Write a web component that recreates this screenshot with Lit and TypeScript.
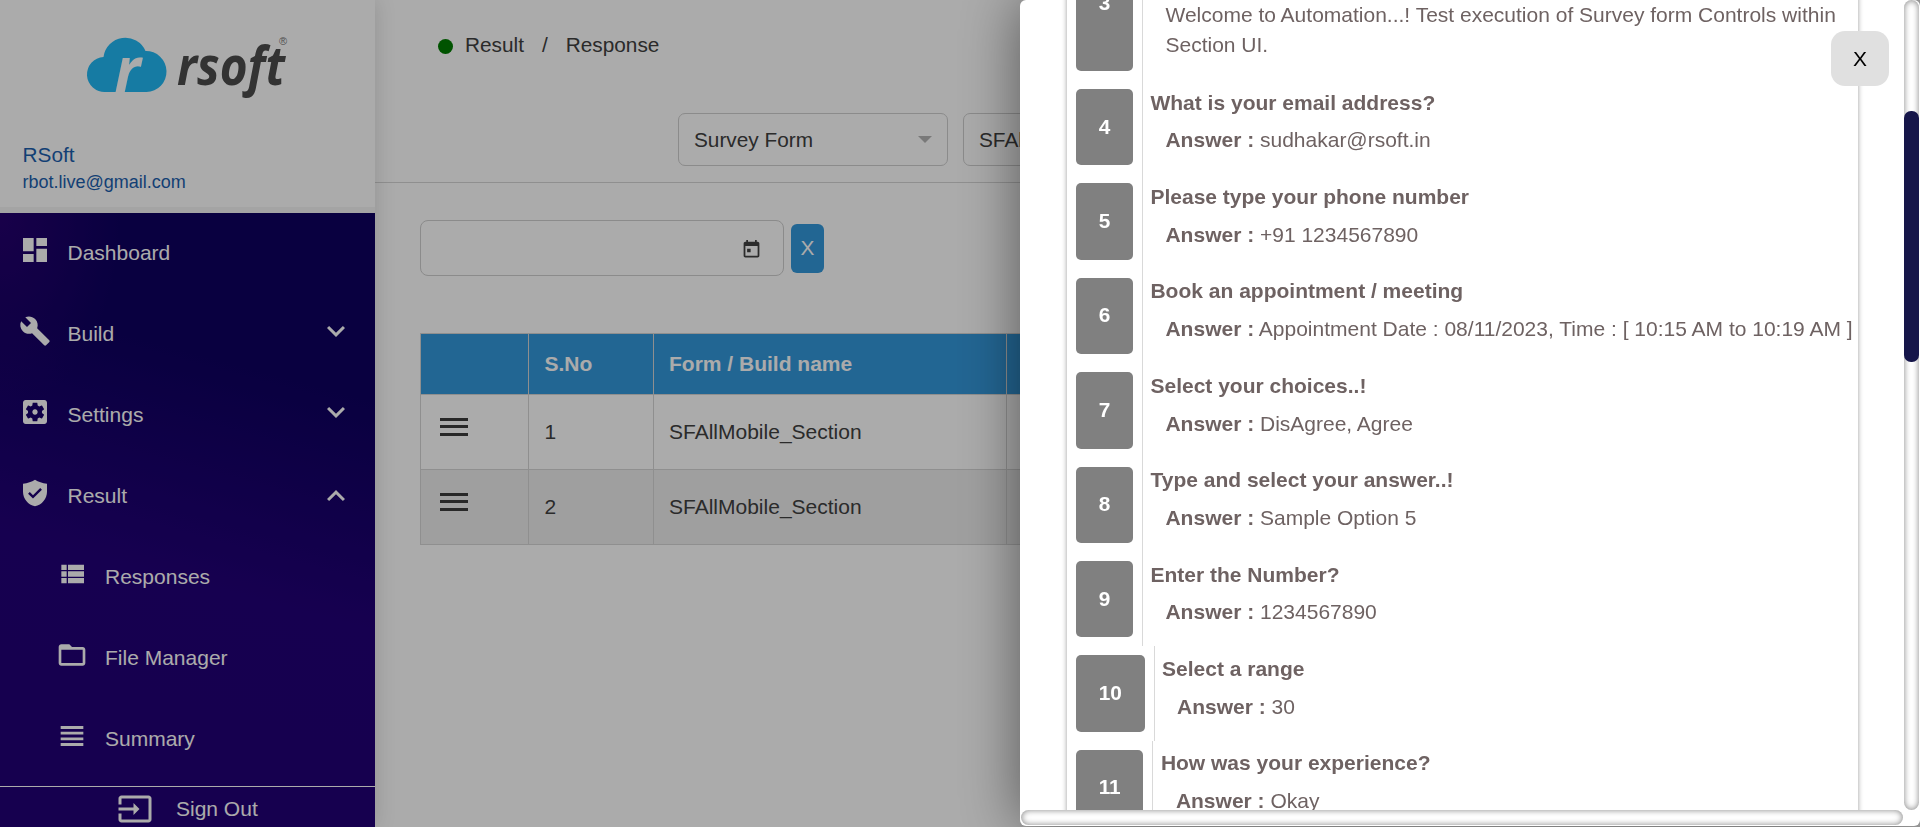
import { LitElement, css, html, svg } from 'lit';
import { customElement } from 'lit/decorators.js';

// material icon paths, 24x24 box
const ICONS: Record<string, string> = {
  dashboard: 'M3 13h8V3H3v10zm0 8h8v-6H3v6zm10 0h8V11h-8v10zm0-18v6h8V3h-8z',
  build:
    'M22.7 19l-9.1-9.1c.9-2.3.4-5-1.5-6.9-2-2-5-2.4-7.4-1.3L9 6 6 9 1.6 4.7C.4 7.1.9 10.1 2.9 12.1c1.9 1.9 4.6 2.4 6.9 1.5l9.1 9.1c.4.4 1 .4 1.4 0l2.3-2.3c.5-.4.5-1.1.1-1.4z',
  settings:
    'M12 10c-1.1 0-2 .9-2 2s.9 2 2 2 2-.9 2-2-.9-2-2-2zm7-7H5c-1.11 0-2 .9-2 2v14c0 1.1.89 2 2 2h14c1.11 0 2-.9 2-2V5c0-1.1-.89-2-2-2zm-1.75 9c0 .23-.02.46-.05.68l1.48 1.16c.13.11.17.3.08.45l-1.4 2.42c-.09.15-.27.21-.43.15l-1.74-.7c-.36.28-.76.51-1.18.69l-.26 1.85c-.03.17-.18.3-.35.3h-2.8c-.17 0-.32-.13-.35-.29l-.26-1.85c-.43-.18-.82-.41-1.18-.69l-1.74.7c-.16.06-.34 0-.43-.15l-1.4-2.42c-.09-.15-.05-.34.08-.45l1.48-1.16c-.03-.23-.05-.46-.05-.69 0-.23.02-.46.05-.68l-1.48-1.16c-.13-.11-.17-.3-.08-.45l1.4-2.42c.09-.15.27-.21.43-.15l1.74.7c.36-.28.76-.51 1.18-.69l.26-1.85c.03-.17.18-.3.35-.3h2.8c.17 0 .32.13.35.29l.26 1.85c.43.18.82.41 1.18.69l1.74-.7c.16-.06.34 0 .43.15l1.4 2.42c.09.15.05.34-.08.45l-1.48 1.16c.03.23.05.46.05.69z',
  shield:
    'M12 2C9.5 3.6 6.5 4.6 3 5v6c0 5.2 3.8 9.8 9 11 5.2-1.2 9-5.8 9-11V5c-3.5-.4-6.5-1.4-9-3zm-1.5 14.2l-3.7-3.7 1.3-1.3 2.4 2.4 5.4-5.4 1.3 1.3-6.7 6.7z',
  list: 'M4 14h4v-4H4v4zm0 5h4v-4H4v4zM4 9h4V5H4v4zm5 5h12v-4H9v4zm0 5h12v-4H9v4zM9 5v4h12V5H9z',
  folder:
    'M20 6h-8l-2-2H4c-1.1 0-1.99.9-1.99 2L2 18c0 1.1.9 2 2 2h16c1.1 0 2-.9 2-2V8c0-1.1-.9-2-2-2zm0 12H4V8h16v10z',
  headline: 'M4 15h16v-2H4v2zm0 4h16v-2H4v2zm0-8h16V9H4v2zm0-6v2h16V5H4z',
  down: 'M16.59 8.59L12 13.17 7.41 8.59 6 10l6 6 6-6z',
  up: 'M12 8l-6 6 1.41 1.41L12 10.83l4.59 4.58L18 14z',
  input:
    'M21 3.01H3c-1.1 0-2 .9-2 2V9h2V4.99h18v14.03H3V15H1v4.01c0 1.1.9 1.98 2 1.98h18c1.1 0 2-.88 2-1.98v-14c0-1.11-.9-2-2-2zM11 16l4-4-4-4v3H1v2h10v3z',
  event:
    'M11 11H7v4h4zM16 1v2H8V1H6v2H5c-1.11 0-1.99.9-1.99 2L3 19c0 1.1.89 2 2 2h14c1.1 0 2-.9 2-2V5c0-1.1-.9-2-2-2h-1V1h-2zm3 18H5V8h14v11z',
};

const icon = (name: string, cls = '') =>
  html`<svg class="icon ${cls}" viewBox="0 0 24 24" fill="currentColor"><path d=${ICONS[name]}></path></svg>`;

const logo = svg`
  <g transform="translate(2.5 0)">
    <path fill="#21b8f3" d="M103 92a17.5 17.5 0 0 1-2-35 22 22 0 0 1 42-6 20.5 20.5 0 0 1 1 41z"></path>
    <text x="112" y="92" class="logo-r">r</text>
  </g>
  <text x="177" y="85" class="logo-word" textLength="108" lengthAdjust="spacingAndGlyphs">rsoft</text>
  <text x="279" y="45" class="logo-reg">®</text>
`;

const NAV = [
  { label: 'Dashboard', icon: 'dashboard' },
  { label: 'Build', icon: 'build', chevron: 'down' },
  { label: 'Settings', icon: 'settings', chevron: 'down' },
  { label: 'Result', icon: 'shield', chevron: 'up' },
  { label: 'Responses', icon: 'list', sub: true },
  { label: 'File Manager', icon: 'folder', sub: true },
  { label: 'Summary', icon: 'headline', sub: true },
];

const ANSWERS = [
  { n: 4, q: 'What is your email address?', a: 'sudhakar@rsoft.in' },
  { n: 5, q: 'Please type your phone number', a: '+91 1234567890' },
  { n: 6, q: 'Book an appointment / meeting', a: 'Appointment Date : 08/11/2023, Time : [ 10:15 AM to 10:19 AM ]' },
  { n: 7, q: 'Select your choices..!', a: 'DisAgree, Agree' },
  { n: 8, q: 'Type and select your answer..!', a: 'Sample Option 5' },
  { n: 9, q: 'Enter the Number?', a: '1234567890' },
  { n: 10, q: 'Select a range', a: '30' },
  { n: 11, q: 'How was your experience?', a: 'Okay' },
];

@customElement('app-root')
export class AppRoot extends LitElement {
  render() {
    return html`
      <aside class="sidebar">
        <div class="brand">
          <svg class="logo" viewBox="0 0 375 120" width="375" height="120">${logo}</svg>
          <div class="user-name">RSoft</div>
          <div class="user-mail">rbot.live@gmail.com</div>
        </div>
        <nav class="nav">
          ${NAV.map(
            (item) => html`
              <div class="nav-item ${item.sub ? 'sub' : ''}">
                ${icon(item.icon, item.icon)}
                <span class="nav-label">${item.label}</span>
                ${item.chevron ? icon(item.chevron, `chevron ${item.chevron}`) : ''}
              </div>
            `
          )}
        </nav>
        <div class="signout">${icon('input', 'signout-icon')}<span>Sign Out</span></div>
      </aside>

      <main class="main">
        <section class="top">
          <div class="crumbs">
            <span class="dot"></span>
            <span>Result</span>
            <span class="slash">/</span>
            <span>Response</span>
          </div>
          <div class="filters">
            <div class="select">Survey Form<span class="caret"></span></div>
            <div class="select">SFAllMobile_Section<span class="caret"></span></div>
          </div>
        </section>

        <div class="date-row">
          <div class="date">${icon('event', 'date-icon')}</div>
          <button class="clear">X</button>
        </div>

        <table class="grid">
          <thead>
            <tr><th class="c-menu"></th><th class="c-no">S.No</th><th class="c-name">Form / Build name</th><th></th></tr>
          </thead>
          <tbody>
            ${[1, 2].map(
              (n) => html`
                <tr>
                  <td><span class="burger"><i></i><i></i><i></i></span></td>
                  <td>${n}</td>
                  <td>SFAllMobile_Section</td>
                  <td></td>
                </tr>
              `
            )}
          </tbody>
        </table>
      </main>

      <div class="backdrop"></div>

      <div class="modal">
        <div class="modal-top">
          <div class="viewport">
            <div class="panel">
              <div class="row first">
                <div class="num">3</div>
                <div class="body"><div class="statement">Welcome to Automation...! Test execution of Survey form Controls within Section UI.</div></div>
              </div>
              ${ANSWERS.map(
                (r) => html`
                  <div class="row">
                    <div class="num">${r.n}</div>
                    <div class="body">
                      <div class="question">${r.q}</div>
                      <div class="answer"><b>Answer :</b> ${r.a}</div>
                    </div>
                  </div>
                `
              )}
            </div>
          </div>
          <div class="vbar"><div class="vthumb"></div></div>
        </div>
        <div class="hbar-row"><div class="hbar"></div></div>
        <button class="close">X</button>
      </div>
    `;
  }

  static styles = css`
    :host {
      display: flex;
      height: 100vh;
      overflow: hidden;
      background: #fff;
      font-family: 'Liberation Sans', Arial, sans-serif;
      font-size: 20.8px;
      color: #404040;
    }

    /* sidebar */
    .sidebar {
      width: 375px;
      flex: none;
      display: flex;
      flex-direction: column;
      box-shadow: 0 0 20px rgba(0, 0, 0, 0.15);
      z-index: 1;
    }
    .brand {
      box-sizing: border-box;
      border-bottom: 6px solid #f5f5f5;
      height: 213px;
      background: #fff;
      padding-left: 22.5px;
      color: #1c5fae;
    }
    .logo {
      display: block;
      margin-left: -22.5px;
      overflow: visible;
    }
    .logo-r {
      font: italic 700 62px 'Open Sans', sans-serif;
      fill: #fff;
    }
    .logo-word {
      font: italic 700 53px 'Open Sans', sans-serif;
      fill: #4d4d4d;
    }
    .logo-reg {
      font: 400 11px 'Liberation Sans', sans-serif;
      fill: #777;
    }
    .user-name {
      margin-top: 22.5px;
      line-height: 24px;
    }
    .user-mail {
      font-size: 18px;
      line-height: 24px;
      margin-top: 3.5px;
    }
    .nav {
      flex: 1;
      display: flex;
      flex-direction: column;
      gap: 9px;
      padding-top: 0.5px;
      font-size: 21px;
      background:
        radial-gradient(120px 200px at 0 0, #25006e 0%, rgba(37, 0, 110, 0) 100%),
        linear-gradient(195deg, #0e0060 0%, #0e0060 28%, #220078 62%, #220076 100%);
    }
    .nav-item {
      height: 72px;
      flex: none;
      display: flex;
      align-items: center;
      color: #fff;
      padding-left: 18.5px;
      padding-right: 21px;
    }
    .nav-item.sub {
      padding-left: 56px;
    }
    .icon {
      width: 32px;
      height: 32px;
      flex: none;
      display: block;
    }
    .icon.headline {
      width: 34px;
      height: 34px;
      margin: 0 -1px;
    }
    .nav-label {
      margin-left: 17px;
      padding-top: 7px;
      flex: 1;
    }
    .chevron {
      width: 36px;
      height: 36px;
      margin-top: 0;
    }
    .chevron.up {
      margin-top: 6px;
    }
    .signout {
      height: 41px;
      box-sizing: border-box;
      flex: none;
      border-top: 1px solid #fff;
      background: #220076;
      color: #fff;
      display: flex;
      align-items: center;
      padding: 3px 0 0 117px;
      gap: 23px;
      font-size: 21px;
    }
    .signout-icon {
      width: 36px;
      height: 36px;
    }

    /* page behind the modal */
    .main {
      flex: 1;
      min-width: 0;
    }
    .top {
      height: 182px;
      border-bottom: 1px solid #d6d6d6;
      padding-left: 63px;
    }
    .crumbs {
      height: 90px;
      display: flex;
      align-items: center;
      gap: 12px;
    }
    .dot {
      width: 15px;
      height: 15px;
      border-radius: 50%;
      background: #007c00;
      margin-top: 2px;
    }
    .slash {
      margin: 0 6px;
    }
    .filters {
      margin-top: 23px;
      margin-left: 240px;
      display: flex;
      gap: 15px;
    }
    .select {
      width: 270px;
      height: 53px;
      box-sizing: border-box;
      border: 1px solid #cfcfcf;
      border-radius: 7px;
      padding: 0 15px;
      display: flex;
      align-items: center;
      justify-content: space-between;
      white-space: nowrap;
    }
    .caret {
      width: 0;
      height: 0;
      border-left: 7px solid transparent;
      border-right: 7px solid transparent;
      border-top: 7px solid #b5b5b5;
    }
    .date-row {
      margin: 37px 0 0 45px;
      display: flex;
      align-items: center;
      gap: 7px;
    }
    .date {
      width: 364px;
      height: 56px;
      box-sizing: border-box;
      border: 1px solid #cfcfcf;
      border-radius: 8px;
      display: flex;
      align-items: center;
      justify-content: flex-end;
      padding: 2px 21px 0 0;
    }
    .date-icon {
      width: 21px;
      height: 21px;
    }
    .clear {
      width: 33px;
      height: 49px;
      padding: 0;
      border: none;
      border-radius: 6px;
      background: #3498db;
      color: #fff;
      font: inherit;
    }
    .grid {
      margin: 57px 0 0 45px;
      width: 1460px;
      table-layout: fixed;
      border-collapse: collapse;
      font-size: 21px;
    }
    .grid th,
    .grid td {
      border: 1px solid #d6d6d6;
      padding: 0 0 0 15.5px;
      text-align: left;
    }
    .grid th {
      height: 60px;
      background: #3498db;
      color: #fff;
      font-weight: 700;
    }
    .grid td {
      height: 74px;
    }
    .grid tbody tr:nth-child(2) td {
      background: #eee;
    }
    .c-menu {
      width: 91.5px;
    }
    .c-no {
      width: 108px;
    }
    .c-name {
      width: 337px;
    }
    .burger {
      display: flex;
      flex-direction: column;
      gap: 4.5px;
      width: 28px;
      margin: -11px 0 0 3.5px;
    }
    .burger i {
      height: 3px;
      background: #3c3c3c;
    }

    /* modal */
    .backdrop {
      position: fixed;
      inset: 0;
      background: rgba(0, 0, 0, 0.33);
      z-index: 2;
    }
    .modal {
      position: fixed;
      top: 0;
      right: 0;
      width: 900px;
      height: 826px;
      z-index: 3;
      background: #fff;
      border-radius: 6px;
      box-shadow: 0 0 60px rgba(0, 0, 0, 0.5);
      display: flex;
      flex-direction: column;
      font-size: 21px;
    }
    .modal-top {
      flex: 1;
      min-height: 0;
      display: flex;
    }
    .viewport {
      flex: 1;
      min-width: 0;
      overflow: hidden;
      padding: 0 46px 0 47px;
    }
    .panel {
      margin-top: -74px;
      padding-left: 9px;
      box-shadow: 0 0 5px rgba(0, 0, 0, 0.4);
      background: #fff;
      color: #6e6262;
    }
    .row {
      display: flex;
      height: 94.4px;
    }
    .row.first {
      height: 154px;
    }
    .num {
      margin: 9px 0;
      padding: 0 22.7px 1px;
      background: #808080;
      border-radius: 5px;
      color: #fff;
      font-size: 20.8px;
      font-weight: 700;
      display: flex;
      align-items: center;
      justify-content: center;
    }
    .body {
      margin-left: 9px;
      padding-left: 7.5px;
      border-left: 1px solid #d9d9d9;
      white-space: nowrap;
    }
    .question {
      font-weight: 700;
      margin-top: 10.7px;
      line-height: 24px;
    }
    .answer {
      margin: 13.7px 0 0 15px;
      line-height: 24px;
    }
    .statement {
      white-space: normal;
      padding: 74px 0 0 15px;
      line-height: 30px;
      width: 690px;
    }
    .vbar {
      width: 15px;
      flex: none;
      margin-right: 1px;
      border-radius: 8px;
      box-shadow: inset 0 0 6px rgba(0, 0, 0, 0.5);
      padding-top: 111px;
      box-sizing: border-box;
    }
    .vthumb {
      height: 251px;
      border-radius: 7px;
      background: #16164a;
    }
    .hbar-row {
      height: 16px;
      flex: none;
      padding-right: 17px;
      padding-left: 1px;
    }
    .hbar {
      height: 15px;
      border-radius: 8px;
      box-shadow: inset 0 0 6px rgba(0, 0, 0, 0.5);
    }
    .close {
      position: absolute;
      top: 31px;
      right: 31px;
      width: 58px;
      height: 55px;
      padding: 0;
      border: none;
      border-radius: 14px;
      background: #e0e0e0;
      color: #000;
      font: 21px 'Liberation Sans', sans-serif;
    }
  `;
}

declare global {
  interface HTMLElementTagNameMap {
    'app-root': AppRoot;
  }
}
